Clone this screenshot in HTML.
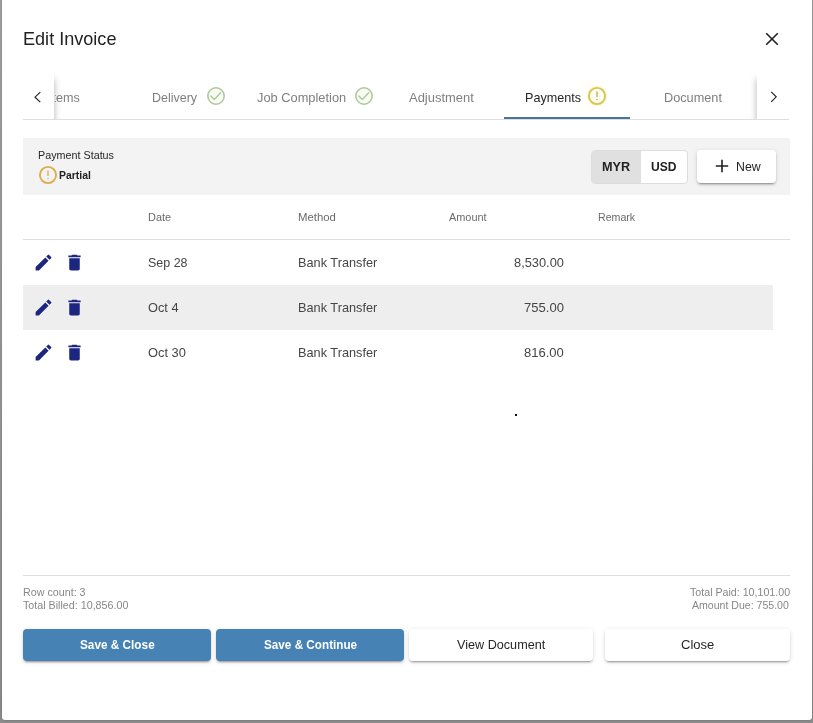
<!DOCTYPE html>
<html lang="en">
<head>
<meta charset="utf-8">
<title>Edit Invoice</title>
<style>
  html, body { margin: 0; padding: 0; }
  body {
    width: 813px; height: 723px; overflow: hidden; position: relative;
    background: linear-gradient(to bottom, #a0a0a0 0%, #8c8c8c 100%);
    font-family: "Liberation Sans", sans-serif;
    color: #212121;
  }
  .abs { position: absolute; }
  .t { position: absolute; white-space: nowrap; line-height: 1; transform-origin: 0 50%; }
  #dialog {
    position: absolute; left: 2px; top: -2px; width: 810px; height: 722px;
    background: #fff; border-radius: 3px;
    box-shadow: 0 0 2px rgba(0,0,0,.3);
  }
  #page { position: absolute; left: 0; top: 0; width: 813px; height: 723px; will-change: transform; }

  #title { font-size: 18.5px; color: #212121; }

  /* tabs */
  #tabclip { left: 23px; top: 72px; width: 766px; height: 48px; overflow: hidden; }
  #tabline { left: 23px; top: 119px; width: 766px; height: 1px; background: #dedede; }
  .tab { font-size: 13px; color: #7f7f7f; }
  .tab.active { color: #262626; }
  #ink { left: 504px; top: 117px; width: 126px; height: 2px; background: #4b7496; }
  .pag { position: absolute; top: 0; height: 48px; background: #fff;
    box-shadow: 0 7px 7px 0 rgba(0,0,0,.31); }
  #pagL { left: 0; width: 31px; }
  #pagR { left: 734px; width: 32px; }

  /* status panel */
  #panel { left: 23px; top: 138px; width: 767px; height: 57px; background: #f3f3f3; }
  #pslabel { font-size: 11px; color: #262626; }
  #psvalue { font-size: 11px; font-weight: bold; color: #212121; }

  #toggle { left: 591px; top: 150px; width: 95px; height: 32px; border: 1px solid #dcdcdc; border-radius: 4px; background: #fff; overflow: hidden; }
  #toggle .on { position: absolute; left: 0; top: 0; width: 49px; height: 32px; background: #e0e0e0; }
  .tg { font-size: 13px; font-weight: bold; color: #212121; }

  #newbtn { left: 697px; top: 150px; width: 79px; height: 33px; background: #fff; border-radius: 4px;
    box-shadow: 0 3px 1px -2px rgba(0,0,0,.2), 0 2px 2px 0 rgba(0,0,0,.14), 0 1px 5px 0 rgba(0,0,0,.12); }
  #newtxt { font-size: 13.4px; color: #262626; }

  /* table */
  .th { font-size: 11px; color: #6a6a6a; }
  #thline { left: 23px; top: 239px; width: 767px; height: 1px; background: #dedede; }
  #rowbg { left: 23px; top: 285px; width: 750px; height: 45px; background: #eeeeee; }
  .td { font-size: 13.5px; color: #454545; }

  #footline { left: 23px; top: 575px; width: 767px; height: 1px; background: #dedede; }
  .ft { font-size: 11px; color: #878787; }

  .btn { position: absolute; top: 629px; height: 32px; border-radius: 4px;
    box-shadow: 0 3px 1px -2px rgba(0,0,0,.2), 0 2px 2px 0 rgba(0,0,0,.14), 0 1px 5px 0 rgba(0,0,0,.12); }
  .btn.pri { background: #4682b4; }
  .btn.sec { background: #fff; }
  .bt { font-size: 13.4px; }
  .bt.w { color: #fff; font-weight: bold; }
  .bt.d { color: #262626; }
</style>
</head>
<body>
<div id="dialog"></div>
<div id="page">

  <svg class="abs" style="left:763px;top:30px" width="18" height="18" viewBox="0 0 18 18"><path d="M3.200 3.200 L14.800 14.800 M14.800 3.200 L3.200 14.800" stroke="#212121" stroke-width="1.600" fill="none"/></svg>

  <!-- tab strip -->
  <div id="tabclip" class="abs">
    <div class="abs" style="left:32px;top:0;width:80px;height:48px;overflow:hidden"><div class="t tab" style="left:-6.2px;top:19px;transform:scaleX(.97)">Items</div></div>
    <div id="pagL" class="pag"></div>
    <div id="pagR" class="pag"></div>
  </div>
  <div id="tabline" class="abs"></div>
  <div id="ink" class="abs"></div>
  <svg class="abs" style="left:205.85px;top:85.85px" width="20" height="20" viewBox="0 0 20 20"><circle cx="10" cy="10" r="8.2" fill="#f8fcf3" stroke="#adc79b" stroke-width="1.500"/><path d="M4.900 10 L8.200 13.400 L14.700 6.800" fill="none" stroke="#adc79b" stroke-width="1.400" stroke-linecap="round" stroke-linejoin="round"/></svg>
  <svg class="abs" style="left:354.0px;top:86.0px" width="20" height="20" viewBox="0 0 20 20"><circle cx="10" cy="10" r="8.2" fill="#f8fcf3" stroke="#adc79b" stroke-width="1.500"/><path d="M4.900 10 L8.200 13.400 L14.700 6.800" fill="none" stroke="#adc79b" stroke-width="1.400" stroke-linecap="round" stroke-linejoin="round"/></svg>
  <svg class="abs" style="left:586.5px;top:85.6px" width="20" height="20" viewBox="0 0 20 20"><circle cx="10" cy="10" r="9.300" fill="none" stroke="#fdf6bd" stroke-width="1.200"/><circle cx="10" cy="10" r="8.100" fill="#fffdf2" stroke="#d9c556" stroke-width="1.9"/><path d="M10 5.500 V11 M10 13.100 V14.300" fill="none" stroke="#b5a74e" stroke-width="1.250"/></svg>
  <svg class="abs" style="left:31px;top:89px" width="14" height="16" viewBox="0 0 14 16"><path d="M9.300 3.200 L4 8.200 L9.300 13.200" fill="none" stroke="#212121" stroke-width="1.150"/></svg>
  <svg class="abs" style="left:766px;top:89px" width="14" height="16" viewBox="0 0 14 16"><path d="M5.200 2.800 L10.200 7.800 L5.200 12.800" fill="none" stroke="#212121" stroke-width="1.150"/></svg>

  <!-- status panel -->
  <div id="panel" class="abs"></div>
  <svg class="abs" style="left:38.0px;top:164.8px" width="20" height="20" viewBox="0 0 20 20"><circle cx="10" cy="10" r="8.100" fill="none" stroke="#dcae4c" stroke-width="1.9"/><path d="M10 5.500 V11 M10 13.100 V14.300" fill="none" stroke="#d9a94a" stroke-width="1.250"/></svg>
  <div id="toggle" class="abs"><div class="on"></div></div>
  <div id="newbtn" class="abs"></div>
  <svg class="abs" style="left:714.3px;top:158.2px" width="16" height="16" viewBox="0 0 16 16"><path d="M8 1.800 V14.200 M1.800 8 H14.200" stroke="#212121" stroke-width="1.600" fill="none"/></svg>

  <!-- table -->
  <div id="thline" class="abs"></div>
  <div id="rowbg" class="abs"></div>
  <svg class="abs" style="left:32.8px;top:252.2px" width="21" height="21" viewBox="0 0 24 24"><path fill="#1c2580" d="M3 17.25V21h3.75L17.81 9.94l-3.75-3.75L3 17.25zM20.71 7.04a.996.996 0 0 0 0-1.41l-2.34-2.34a.996.996 0 0 0-1.41 0l-1.83 1.83 3.75 3.75 1.83-1.830z"/></svg>
  <svg class="abs" style="left:64.4px;top:252.3px" width="21" height="21" viewBox="0 0 24 24"><path fill="#1c2580" d="M6 19c0 1.1.9 2 2 2h8c1.1 0 2-.9 2-2V7H6v12zM19 4h-3.5l-1-1h-5l-1 1H5v2h14V4z"/></svg>
  <svg class="abs" style="left:32.8px;top:297.2px" width="21" height="21" viewBox="0 0 24 24"><path fill="#1c2580" d="M3 17.25V21h3.75L17.81 9.94l-3.75-3.75L3 17.25zM20.71 7.04a.996.996 0 0 0 0-1.41l-2.34-2.34a.996.996 0 0 0-1.41 0l-1.83 1.83 3.75 3.75 1.83-1.830z"/></svg>
  <svg class="abs" style="left:64.4px;top:297.3px" width="21" height="21" viewBox="0 0 24 24"><path fill="#1c2580" d="M6 19c0 1.1.9 2 2 2h8c1.1 0 2-.9 2-2V7H6v12zM19 4h-3.5l-1-1h-5l-1 1H5v2h14V4z"/></svg>
  <svg class="abs" style="left:32.8px;top:342.2px" width="21" height="21" viewBox="0 0 24 24"><path fill="#1c2580" d="M3 17.25V21h3.75L17.81 9.94l-3.75-3.75L3 17.25zM20.71 7.04a.996.996 0 0 0 0-1.41l-2.34-2.34a.996.996 0 0 0-1.41 0l-1.83 1.83 3.75 3.75 1.83-1.830z"/></svg>
  <svg class="abs" style="left:64.4px;top:342.3px" width="21" height="21" viewBox="0 0 24 24"><path fill="#1c2580" d="M6 19c0 1.1.9 2 2 2h8c1.1 0 2-.9 2-2V7H6v12zM19 4h-3.5l-1-1h-5l-1 1H5v2h14V4z"/></svg>
  <div class="abs" style="left:515px;top:414px;width:2px;height:2px;background:#111"></div>

  <!-- footer -->
  <div id="footline" class="abs"></div>
  <div class="btn pri" style="left:23px;width:188px"></div>
  <div class="btn pri" style="left:216px;width:188px"></div>
  <div class="btn sec" style="left:409px;width:184px"></div>
  <div class="btn sec" style="left:605px;width:185px"></div>

  <!-- text -->
  <div id="title" class="t" style="left:22.69px;top:29.5px;transform:scaleX(0.9772)">Edit Invoice</div>
  <div id="tb_del" class="t tab" style="left:152.04px;top:91px;transform:scaleX(0.9596)">Delivery</div>
  <div id="tb_job" class="t tab" style="left:256.84px;top:91px;transform:scaleX(0.9876)">Job Completion</div>
  <div id="tb_adj" class="t tab" style="left:409.17px;top:91px;transform:scaleX(0.9957)">Adjustment</div>
  <div id="tb_pay" class="t tab active" style="left:524.78px;top:91px;transform:scaleX(0.9703)">Payments</div>
  <div id="tb_doc" class="t tab" style="left:664.03px;top:91px;transform:scaleX(0.9781)">Document</div>
  <div id="pslabel" class="t" style="left:37.57px;top:150px;transform:scaleX(0.9786)">Payment Status</div>
  <div id="psvalue" class="t" style="left:58.95px;top:170px;transform:scaleX(0.9461)">Partial</div>
  <div id="tg_myr" class="t tg" style="left:602.02px;top:160px;transform:scaleX(0.9740)">MYR</div>
  <div id="tg_usd" class="t tg" style="left:651.05px;top:160px;transform:scaleX(0.9298)">USD</div>
  <div id="newtxt" class="t" style="left:735.87px;top:159.5px;transform:scaleX(0.9198)">New</div>
  <div id="th_date" class="t th" style="left:147.87px;top:212.3px;transform:scaleX(0.9926)">Date</div>
  <div id="th_meth" class="t th" style="left:297.85px;top:212.3px;transform:scaleX(1.0332)">Method</div>
  <div id="th_amt" class="t th" style="left:449.00px;top:212.3px;transform:scaleX(0.9920)">Amount</div>
  <div id="th_rem" class="t th" style="left:597.76px;top:212.3px;transform:scaleX(0.9656)">Remark</div>
  <div id="r1_date" class="t td" style="left:148.12px;top:256px;transform:scaleX(0.9245)">Sep 28</div>
  <div id="r1_meth" class="t td" style="left:298.35px;top:256px;transform:scaleX(0.9436)">Bank Transfer</div>
  <div id="r1_amt" class="t td" style="left:513.91px;top:256px;transform:scaleX(0.9502)">8,530.00</div>
  <div id="r2_date" class="t td" style="left:147.57px;top:301px;transform:scaleX(0.9481)">Oct 4</div>
  <div id="r2_meth" class="t td" style="left:298.35px;top:301px;transform:scaleX(0.9436)">Bank Transfer</div>
  <div id="r2_amt" class="t td" style="left:523.79px;top:301px;transform:scaleX(0.9658)">755.00</div>
  <div id="r3_date" class="t td" style="left:147.58px;top:346px;transform:scaleX(0.9508)">Oct 30</div>
  <div id="r3_meth" class="t td" style="left:298.35px;top:346px;transform:scaleX(0.9436)">Bank Transfer</div>
  <div id="r3_amt" class="t td" style="left:523.77px;top:346px;transform:scaleX(0.9635)">816.00</div>
  <div id="ft_rows" class="t ft" style="left:22.87px;top:587.3px;transform:scaleX(0.9744)">Row count: 3</div>
  <div id="ft_bill" class="t ft" style="left:23.16px;top:600.3px;transform:scaleX(0.9732)">Total Billed: 10,856.00</div>
  <div id="ft_paid" class="t ft" style="left:689.83px;top:587.3px;transform:scaleX(0.9684)">Total Paid: 10,101.00</div>
  <div id="ft_due" class="t ft" style="left:692.18px;top:600.3px;transform:scaleX(0.9599)">Amount Due: 755.00</div>
  <div id="bt1" class="t bt w" style="left:79.53px;top:637.5px;transform:scaleX(0.8802)">Save &amp; Close</div>
  <div id="bt2" class="t bt w" style="left:263.56px;top:637.5px;transform:scaleX(0.8752)">Save &amp; Continue</div>
  <div id="bt3" class="t bt d" style="left:457.35px;top:637.5px;transform:scaleX(0.9430)">View Document</div>
  <div id="bt4" class="t bt d" style="left:681.16px;top:637.5px;transform:scaleX(0.9704)">Close</div>

</div>
</body>
</html>
